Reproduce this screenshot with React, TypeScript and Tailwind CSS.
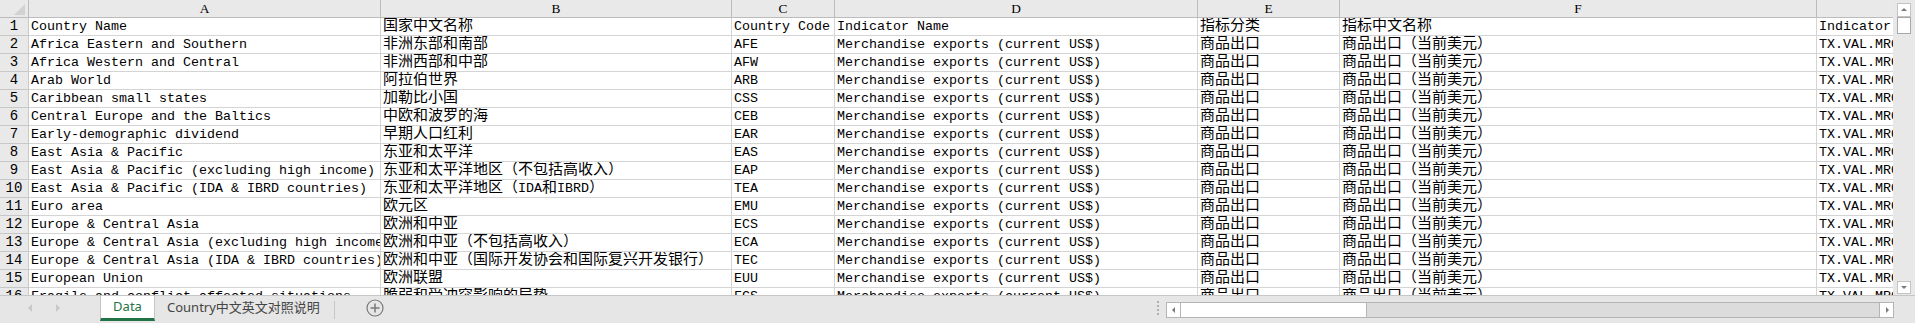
import type { ReactNode } from "react";

const cols = [
  { key: "A", w: "w-[352px]" },
  { key: "B", w: "w-[351px]" },
  { key: "C", w: "w-[103px]" },
  { key: "D", w: "w-[363px]" },
  { key: "E", w: "w-[142px]" },
  { key: "F", w: "w-[477px]" },
  { key: "G", w: "w-[210px]" },
];

const ind = "Merchandise exports (current US$)";
const code = "TX.VAL.MRCH.CD.WT";

const rows: string[][] = [
  ["Country Name", "国家中文名称", "Country Code", "Indicator Name", "指标分类", "指标中文名称", "Indicator Code"],
  ["Africa Eastern and Southern", "非洲东部和南部", "AFE"],
  ["Africa Western and Central", "非洲西部和中部", "AFW"],
  ["Arab World", "阿拉伯世界", "ARB"],
  ["Caribbean small states", "加勒比小国", "CSS"],
  ["Central Europe and the Baltics", "中欧和波罗的海", "CEB"],
  ["Early-demographic dividend", "早期人口红利", "EAR"],
  ["East Asia & Pacific", "东亚和太平洋", "EAS"],
  ["East Asia & Pacific (excluding high income)", "东亚和太平洋地区（不包括高收入）", "EAP"],
  ["East Asia & Pacific (IDA & IBRD countries)", "东亚和太平洋地区（IDA和IBRD）", "TEA"],
  ["Euro area", "欧元区", "EMU"],
  ["Europe & Central Asia", "欧洲和中亚", "ECS"],
  ["Europe & Central Asia (excluding high income)", "欧洲和中亚（不包括高收入）", "ECA"],
  ["Europe & Central Asia (IDA & IBRD countries)", "欧洲和中亚（国际开发协会和国际复兴开发银行）", "TEC"],
  ["European Union", "欧洲联盟", "EUU"],
  ["Fragile and conflict affected situations", "脆弱和受冲突影响的局势", "FCS"],
].map((r) => (r.length === 3 ? [...r, ind, "商品出口", "商品出口（当前美元）", code] : r));

// CJK runs are a bit wider than the latin half-width glyphs
function Txt({ s }: { s: string }) {
  const parts = s.split(/([\u3000-\u9fff\uff00-\uffef]+)/);
  return (
    <>
      {parts.map((p, i) =>
        i % 2 ? (
          <span key={i} className="text-[15px]">
            {p}
          </span>
        ) : (
          p
        )
      )}
    </>
  );
}

function Cell({ w, children }: { w: string; children: ReactNode }) {
  return (
    <div className={`${w} shrink-0 overflow-hidden whitespace-nowrap border-r border-b border-[#d4d4d4] pl-[2px] leading-[17px]`}>
      {children}
    </div>
  );
}

function Arrow({ dir }: { dir: "up" | "down" | "left" | "right" }) {
  const pts = {
    up: "2,6 8,6 5,3",
    down: "2,3 8,3 5,6",
    left: "6,2 6,8 3,5",
    right: "4,2 4,8 7,5",
  }[dir];
  return (
    <svg width="10" height="10" viewBox="0 0 10 10">
      <polygon points={pts} fill="#7a7a7a" />
    </svg>
  );
}

export default function App() {
  return (
    <div className="flex h-[323px] w-[1915px] flex-col overflow-hidden bg-white text-[13.33px] text-black" style={{ fontFamily: '"Liberation Mono", "Noto Sans CJK SC", monospace' }}>
      <div className="flex h-[295px]">
        <div className="w-[1893px] overflow-hidden">
          {/* column headers */}
          <div className="flex h-[18px] bg-[#e9e9e9]">
            <div className="flex h-[18px] w-[29px] shrink-0 items-end justify-end border-r border-b border-[#bcbcbc] pr-[3px] pb-[2px]">
              <svg width="11" height="11" viewBox="0 0 11 11">
                <polygon points="0,11 11,11 11,0" fill="#d2d2d2" />
              </svg>
            </div>
            {cols.map((c) => (
              <div key={c.key} className={`${c.w} shrink-0 border-r border-b border-[#bcbcbc] text-center leading-[17px]`} style={{ fontFamily: '"Liberation Serif", serif' }}>
                {c.key}
              </div>
            ))}
          </div>
          {rows.map((r, i) => (
            <div key={i} className="flex h-[18px]">
              <div className="w-[29px] shrink-0 border-r border-b border-[#c8c8c8] bg-[#e9e9e9] text-center text-[14px] leading-[17px]">
                {i + 1}
              </div>
              {cols.map((c, j) => (
                <Cell key={c.key} w={c.w}>
                  <Txt s={r[j]} />
                </Cell>
              ))}
            </div>
          ))}
        </div>
        {/* vertical scrollbar */}
        <div className="flex w-[22px] flex-col bg-[#e8e8e8] pl-[4px] pt-[3px]">
          <div className="flex h-[14px] w-[14px] items-center justify-center border border-[#c4c4c4] bg-white">
            <Arrow dir="up" />
          </div>
          <div className="h-[17px] w-[14px] border border-[#a8a8a8] bg-white" />
          <div className="flex-1" />
          <div className="mb-[1px] flex h-[13px] w-[14px] items-center justify-center border border-[#c4c4c4] bg-white">
            <Arrow dir="down" />
          </div>
        </div>
      </div>

      {/* sheet tabs + horizontal scrollbar */}
      <div className="flex h-[28px] items-start border-t border-[#c6c6c6] bg-[#e6e6e6] text-[13px] whitespace-nowrap" style={{ fontFamily: '"Noto Sans", "Noto Sans CJK SC", sans-serif' }}>
        <div className="flex h-[24px] w-[100px] items-center gap-[20px] pl-[26px]">
          <svg width="8" height="10" viewBox="0 0 8 10">
            <polygon points="6,1 6,9 2,5" fill="#c8c8c8" />
          </svg>
          <svg width="8" height="10" viewBox="0 0 8 10">
            <polygon points="2,1 2,9 6,5" fill="#c8c8c8" />
          </svg>
        </div>
        <div className="flex h-[25px] w-[55px] items-center justify-center border-x border-b-[3px] border-x-[#c6c6c6] border-b-[#217346] bg-white text-[#217346]">
          Data
        </div>
        <div className="flex h-[24px] w-[179px] items-center pl-[12px] text-[#444]">
          Country中文英文对照说明
        </div>
        <div className="mt-[5px] h-[18px] w-px bg-[#c6c6c6]" />
        <div className="flex h-[24px] w-[80px] items-center pl-[31px]">
          <svg width="18" height="18" viewBox="0 0 18 18">
            <circle cx="9" cy="9" r="8" fill="none" stroke="#7a7a7a" strokeWidth="1.2" />
            <path d="M9 4.5v9M4.5 9h9" stroke="#7a7a7a" strokeWidth="1.5" />
          </svg>
        </div>
        <div className="flex-1" />
        <div className="flex h-[24px] w-[16px] flex-col items-center justify-center gap-[2px]">
          <div className="h-[2px] w-[2px] bg-[#b0b0b0]" />
          <div className="h-[2px] w-[2px] bg-[#b0b0b0]" />
          <div className="h-[2px] w-[2px] bg-[#b0b0b0]" />
          <div className="h-[2px] w-[2px] bg-[#b0b0b0]" />
        </div>
        <div className="mt-[6px] flex h-[16px] w-[728px] border border-[#b5b5b5] bg-[#dcdcdc]">
          <div className="flex w-[14px] items-center justify-center border-r border-[#b5b5b5] bg-white">
            <Arrow dir="left" />
          </div>
          <div className="w-[186px] border-r border-[#b5b5b5] bg-white" />
          <div className="flex-1" />
          <div className="flex w-[14px] items-center justify-center border-l border-[#b5b5b5] bg-white">
            <Arrow dir="right" />
          </div>
        </div>
        <div className="w-[21px]" />
      </div>
    </div>
  );
}
